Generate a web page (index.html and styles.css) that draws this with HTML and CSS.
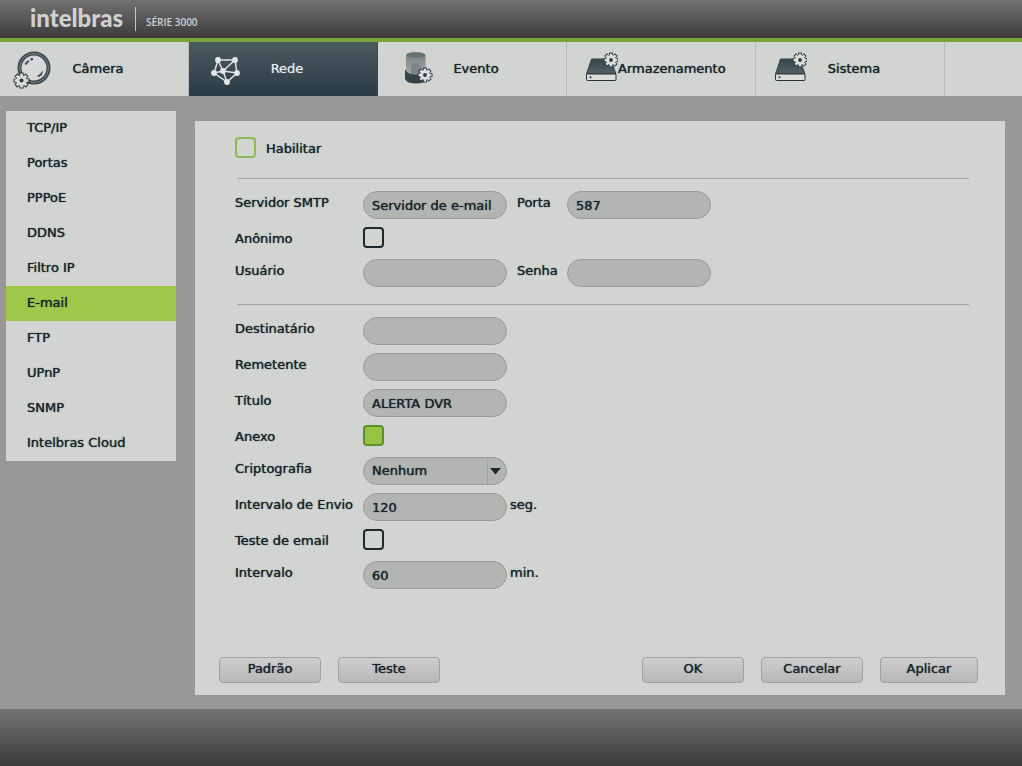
FILE: index.html
```html
<!DOCTYPE html>
<html lang="pt-BR">
<head>
<meta charset="utf-8">
<title>Intelbras - E-mail</title>
<link rel="stylesheet" href="styles.css">
</head>
<body>
<svg class="defs" aria-hidden="true">
  <symbol id="gear" viewBox="-8 -8 16 16">
    <path d="M0-7.500V7.500M-7.500 0H7.500M-5.300-5.300L5.300 5.300M-5.300 5.300L5.300-5.300" stroke="#2c393f" stroke-width="4"/>
    <circle r="5.600" fill="#2c393f"/>
    <path d="M0-6.500V6.500M-6.500 0H6.500M-4.600-4.600L4.600 4.600M-4.600 4.600L4.600-4.600" stroke="#dcdedb" stroke-width="2.400"/>
    <circle r="5" fill="#dcdedb"/>
    <circle r="1.900" fill="#2c393f"/>
  </symbol>
  <symbol id="disk" viewBox="0 0 51 54">
    <path d="M24.500 17H43.500L49 32H19.500Z" fill="url(#slate)" stroke="#34434a"/>
    <rect x="19.500" y="32" width="29.500" height="6.500" rx="1" fill="#dcdedb" stroke="#263238"/>
    <circle cx="23.500" cy="35.300" r="1" fill="#263238"/>
    <use href="#gear" x="36" y="10" width="16" height="16"/>
  </symbol>
  <linearGradient id="slate" x1="0" y1="0" x2="0" y2="1">
    <stop offset="0" stop-color="#35444a"/><stop offset="1" stop-color="#536168"/>
  </linearGradient>
  <linearGradient id="glass" x1="0" y1="0" x2="0" y2="1">
    <stop offset="0" stop-color="#7b8586"/><stop offset="1" stop-color="#a3aaa8"/>
  </linearGradient>
</svg>

<header class="header">
  <span class="logo">intelbras</span>
  <span class="series">SÉRIE 3000</span>
</header>

<nav class="tabs">
  <a class="tab" href="#camera">
    <svg class="tab-icon" viewBox="0 0 51 54" aria-hidden="true">
      <circle cx="34" cy="26" r="14.500" fill="#d6d9d7" stroke="#3b484e" stroke-width="4"/>
      <circle cx="34" cy="26" r="14.500" fill="none" stroke="#7d8789" stroke-width="1"/>
      <path d="M25.500 22.500Q28 18 33 17" fill="none" stroke="#3b484e" stroke-width="2" stroke-dasharray="5 2"/>
      <path d="M37 34Q41 32 43 28L42 33L39 35Z" fill="#3b484e"/>
      <use href="#gear" x="13" y="30" width="17" height="17"/>
    </svg>
    <span class="tab-label">Câmera</span>
  </a>
  <a class="tab tab-active" href="#rede" aria-current="page">
    <svg class="tab-icon" viewBox="0 0 51 54" aria-hidden="true">
      <path d="M29 18H46L48 31L38 40L25 31ZL34 29L46 18M25 31L34 29L48 31M34 29L38 40" fill="none" stroke="#dfe2e1" stroke-width="1.500"/>
      <g fill="#e6e8e7"><circle cx="29" cy="18" r="2.900"/><circle cx="46" cy="18" r="2.900"/><circle cx="25" cy="31" r="2.900"/><circle cx="48" cy="31" r="2.900"/><circle cx="34" cy="29" r="2.900"/><circle cx="38" cy="40" r="2.900"/></g>
    </svg>
    <span class="tab-label">Rede</span>
  </a>
  <a class="tab" href="#evento">
    <svg class="tab-icon" viewBox="0 0 51 54" aria-hidden="true">
      <path d="M27 28V37Q29 41.500 38 41.500T48 37V28Z" fill="#34434a"/>
      <path d="M28 13V29Q31 32.500 38 32.500T47.500 29V13Z" fill="url(#glass)"/>
      <ellipse cx="37.700" cy="13" rx="9.700" ry="3" fill="#667376"/>
      <path d="M33 32V25Q34 21 38 21T43 25V32Z" fill="#7c8688"/>
      <use href="#gear" x="39" y="25" width="16" height="16"/>
    </svg>
    <span class="tab-label">Evento</span>
  </a>
  <a class="tab" href="#armazenamento">
    <svg class="tab-icon" aria-hidden="true"><use href="#disk"/></svg>
    <span class="tab-label">Armazenamento</span>
  </a>
  <a class="tab" href="#sistema">
    <svg class="tab-icon" aria-hidden="true"><use href="#disk"/></svg>
    <span class="tab-label">Sistema</span>
  </a>
</nav>

<main class="content">
  <nav class="sidebar">
    <a class="side-item" href="#tcpip">TCP/IP</a>
    <a class="side-item" href="#portas">Portas</a>
    <a class="side-item" href="#pppoe">PPPoE</a>
    <a class="side-item" href="#ddns">DDNS</a>
    <a class="side-item" href="#filtro">Filtro IP</a>
    <a class="side-item side-active" href="#email" aria-current="page">E-mail</a>
    <a class="side-item" href="#ftp">FTP</a>
    <a class="side-item" href="#upnp">UPnP</a>
    <a class="side-item" href="#snmp">SNMP</a>
    <a class="side-item" href="#cloud">Intelbras Cloud</a>
  </nav>

  <form class="panel">
    <div class="enable">
      <input class="check check-green" type="checkbox" id="habilitar">
      <label for="habilitar">Habilitar</label>
    </div>

    <div class="group">
      <div class="row">
        <label class="label" for="smtp">Servidor SMTP</label>
        <input class="field" type="text" id="smtp" value="Servidor de e-mail">
        <label class="label-second" for="porta">Porta</label>
        <input class="field" type="text" id="porta" value="587">
      </div>
      <div class="row row-check">
        <label class="label" for="anonimo">Anônimo</label>
        <input class="check" type="checkbox" id="anonimo">
      </div>
      <div class="row">
        <label class="label" for="usuario">Usuário</label>
        <input class="field" type="text" id="usuario">
        <label class="label-second" for="senha">Senha</label>
        <input class="field" type="password" id="senha">
      </div>
    </div>

    <div class="group">
      <div class="row">
        <label class="label" for="destinatario">Destinatário</label>
        <input class="field" type="text" id="destinatario">
      </div>
      <div class="row">
        <label class="label" for="remetente">Remetente</label>
        <input class="field" type="text" id="remetente">
      </div>
      <div class="row">
        <label class="label" for="titulo">Título</label>
        <input class="field" type="text" id="titulo" value="ALERTA DVR">
      </div>
      <div class="row row-check">
        <label class="label" for="anexo">Anexo</label>
        <input class="check" type="checkbox" id="anexo" checked>
      </div>
      <div class="row">
        <label class="label" for="cripto">Criptografia</label>
        <span class="select-wrap">
          <select class="field" id="cripto"><option>Nenhum</option><option>SSL</option><option>TLS</option></select>
          <svg class="select-arrow" viewBox="0 0 20 26" aria-hidden="true"><path d="M.5 0V26" stroke="#a0a39f"/><path d="M3 10H14L8.500 16.500Z" fill="#1c2a30"/></svg>
        </span>
      </div>
      <div class="row">
        <label class="label" for="envio">Intervalo de Envio</label>
        <input class="field" type="text" id="envio" value="120">
        <span class="unit">seg.</span>
      </div>
      <div class="row row-check">
        <label class="label" for="teste">Teste de email</label>
        <input class="check" type="checkbox" id="teste">
      </div>
      <div class="row">
        <label class="label" for="intervalo">Intervalo</label>
        <input class="field" type="text" id="intervalo" value="60">
        <span class="unit">min.</span>
      </div>
    </div>

    <div class="actions">
      <button class="button" type="button">Padrão</button>
      <button class="button" type="button">Teste</button>
      <button class="button button-push" type="button">OK</button>
      <button class="button" type="button">Cancelar</button>
      <button class="button button-short" type="button">Aplicar</button>
    </div>
  </form>
</main>

<footer class="footer"></footer>
</body>
</html>
```

FILE: styles.css
```css
* {
  box-sizing: border-box;
}

body {
  margin: 0;
  min-height: 100vh;
  display: flex;
  flex-direction: column;
  background: #9a979a;
  color: #17252b;
  font: 13px/24px "DejaVu Sans", Verdana, sans-serif;
  text-shadow: 0 0 1px #17252b;
}

a {
  color: inherit;
  text-decoration: none;
}

.defs {
  position: absolute;
  width: 0;
  height: 0;
}

.header {
  display: flex;
  align-items: center;
  height: 42px;
  padding-left: 30px;
  border-bottom: 4px solid #79a336;
  background: linear-gradient(#737173, #3c3b3c);
  color: #d0d0d0;
  text-shadow: none;
}

.logo {
  width: 106px;
  height: 24px;
  border-right: 1px solid #c4c4c4;
  font: 900 24px/22px Lato, sans-serif;
}

.series {
  padding: 6px 0 0 10px;
  font: 600 10px/12px "Open Sans", sans-serif;
}

.tabs {
  display: flex;
  height: 54px;
  background: #d2d4d1;
}

.tab {
  display: flex;
  flex: 0 1 189px;
  border-right: 1px solid #b9bcb8;
}

.tab-active {
  border-right-color: #3b4a51;
  background: linear-gradient(#4c5b62, #2b3b43);
  color: #eef0ef;
  text-shadow: 0 0 1px #9aa5a9;
}

.tab-icon {
  flex: none;
  width: 51px;
  height: 54px;
  overflow: visible;
}

.tab-label {
  min-width: 94px;
  line-height: 54px;
  text-align: center;
}

.content {
  flex: 1;
  display: flex;
  align-items: flex-start;
  gap: 19px;
  padding: 15px 17px 14px 6px;
}

.sidebar {
  flex: none;
  width: 170px;
  background: #d2d4d1;
}

.side-item {
  display: block;
  padding-left: 21px;
  line-height: 33px;
  padding-bottom: 2px;
}

.side-active {
  background: #9fc74a;
}

.panel {
  flex: 1;
  align-self: stretch;
  display: flex;
  flex-direction: column;
  margin-top: 10px;
  padding: 16px 27px 12px 24px;
  background: #d2d4d1;
}

.enable {
  display: flex;
  align-items: flex-start;
  gap: 10px;
  padding-left: 16px;
  margin-bottom: 18px;
}

.enable label {
  line-height: 23px;
}

.group {
  display: flex;
  flex-direction: column;
  gap: 8px;
  margin: 0 9px 0 18px;
  padding: 12px 0 17px;
  border-top: 1px solid #a3a5a2;
}

.row {
  display: flex;
  align-items: flex-start;
  height: 28px;
  margin-left: -2px;
}

.row-check {
  height: 24px;
}

.label {
  flex: none;
  width: 128px;
}

.label-second {
  width: 60px;
  padding-left: 10px;
}

.unit {
  padding-left: 3px;
}

.field {
  appearance: none;
  width: 144px;
  height: 28px;
  margin: 0;
  padding: 0 8px;
  border: 1px solid #999c98;
  border-radius: 14px;
  background: #b3b5b2;
  color: inherit;
  font: inherit;
  text-shadow: inherit;
}

.select-wrap {
  position: relative;
}

.select-wrap .field {
  display: block;
}

.select-arrow {
  position: absolute;
  top: 1px;
  right: 0;
  width: 20px;
  height: 26px;
  pointer-events: none;
}

.check {
  appearance: none;
  flex: none;
  width: 21px;
  height: 21px;
  margin: 0;
  border: 2px solid #1c2a2e;
  border-radius: 4px;
}

.check-green {
  border-color: #8cb954;
}

.check:checked {
  border-color: #5c9127;
  background: #97c443;
}

.actions {
  display: flex;
  gap: 17px;
  margin-top: auto;
}

.button {
  width: 102px;
  height: 26px;
  padding: 0 0 2px;
  border: 1px solid #a19fa0;
  border-radius: 4px;
  background: linear-gradient(#d0cdce, #b9b6b7);
  color: inherit;
  font: inherit;
  line-height: 22px;
  text-shadow: inherit;
}

.button-push {
  margin-left: auto;
}

.button-short {
  width: 98px;
}

.footer {
  height: 57px;
  background: linear-gradient(#757375, #3c3b3b);
}
```
